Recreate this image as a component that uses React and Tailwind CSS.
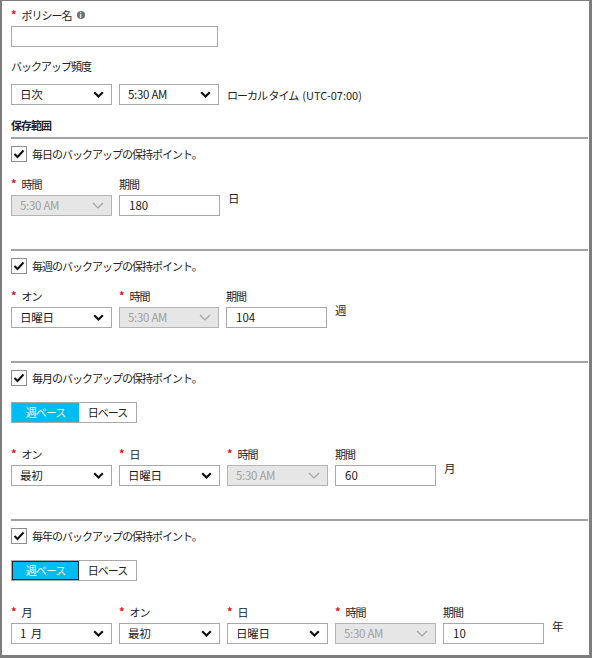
import React from "react";

const Chevron = ({ disabled }) =>
  disabled ? (
    <svg width="12" height="7" viewBox="0 0 12 7" fill="none">
      <path d="M1 1L6 6L11 1" stroke="#a3a3a3" strokeWidth="1.2" />
    </svg>
  ) : (
    <svg width="11" height="7" viewBox="0 0 11 7" fill="none">
      <path d="M1.2 1.2L5.5 5.5L9.8 1.2" stroke="#111" strokeWidth="2.2" />
    </svg>
  );

const Select = ({ value, disabled, w = "w-[101px]" }) => (
  <div
    className={`${w} h-[21px] flex items-center justify-between pl-[8px] pr-[7px] border ${
      disabled ? "bg-[#e6e6e6] border-[#b4b4b4] text-[#a0a0a0]" : "bg-white border-[#a8a8a8] text-[#1a1a1a]"
    }`}
  >
    <span className="text-[11.5px] leading-[19px] whitespace-pre tracking-[-0.3px]">{value}</span>
    <Chevron disabled={disabled} />
  </div>
);

const Input = ({ value = "", w = "w-[101px]" }) => (
  <div className={`${w} h-[21px] flex items-center pl-[9px] border border-[#a8a8a8] bg-white text-[#1a1a1a] text-[11.5px] leading-[19px]`}>
    {value}
  </div>
);

const Star = () => <span className="text-[#e0101a] font-bold text-[11px] mr-[5px] mt-[-2px]">*</span>;

// japanese text in the original is set in a narrow UI face
const jp = "text-[11px] tracking-[-1px] text-[#222]";

const Label = ({ text, required }) => (
  <div className="h-[16px] leading-[16px] mb-[3px] flex items-center">
    {required && <Star />}
    <span className={jp}>{text}</span>
  </div>
);

const Field = ({ label, required, children }) => (
  <div className="flex flex-col">
    <Label text={label} required={required} />
    {children}
  </div>
);

const Check = ({ text }) => (
  <div className="flex items-center h-[16px] mt-[7px]">
    <div className="w-[16px] h-[16px] border border-[#8c8c8c] bg-white flex items-center justify-center">
      <svg width="12" height="10" viewBox="0 0 12 10" fill="none">
        <path d="M1.5 5L4.5 8L10.5 1.5" stroke="#111" strokeWidth="2" />
      </svg>
    </div>
    <span className={`ml-[5px] leading-[16px] ${jp}`}>{text}</span>
  </div>
);

const Toggle = ({ focus }) => (
  <div className="flex mt-[16px] h-[21px] w-[126px] border border-[#a8a8a8] text-[11px] tracking-[-1px]">
    <div
      className={`w-[67px] bg-[#00bcf2] text-white flex items-center justify-center ${
        focus ? "outline outline-1 outline-[#2b2b2b] -outline-offset-1" : ""
      }`}
    >
      週ベース
    </div>
    <div className="flex-1 bg-white text-[#222] flex items-center justify-center">日ベース</div>
  </div>
);

const Divider = () => <div className="h-[2px] bg-[#a3a3a3] mr-[1px]" />;

const Unit = ({ text }) => (
  <div className="self-end ml-[1px] mb-[4px] h-[21px] text-[11.5px] leading-[13px] text-[#222] pt-[1px]">{text}</div>
);

export default function App() {
  return (
    <div className="w-[592px] h-[658px] bg-white border-t border-l-2 border-r-[3px] border-b-[3px] border-[#7d7d7d] overflow-hidden font-['Noto_Sans_CJK_JP','Noto_Sans',sans-serif]">
      <div className="pl-[9px] pt-[6px]">
        <div className="h-[16px] leading-[16px] flex items-center">
          <Star />
          <span className={jp}>ポリシー名</span>
          <span className="ml-[5px] w-[8px] h-[8px] rounded-full bg-[#6e6e6e] text-white text-[7px] font-bold leading-[8px] text-center">
            i
          </span>
        </div>
        <div className="mt-[3px]">
          <Input w="w-[207px]" />
        </div>

        <div className={`mt-[11px] h-[16px] leading-[16px] ${jp}`}>バックアップ頻度</div>
        <div className="mt-[10px] h-[21px] flex items-center gap-[7px]">
          <Select value="日次" />
          <Select value="5:30 AM" w="w-[100px]" />
          <span className="ml-[1px] text-[11px] leading-[16px] text-[#222]">
            <span className={jp}>ローカル タイム</span>
            <span className="ml-[4px]">(UTC-07:00)</span>
          </span>
        </div>

        <div className={`mt-[12px] h-[16px] leading-[16px] font-bold ${jp}`}>保存範囲</div>
        <div className="mt-[4px]">
          <Divider />
        </div>

        {/* 日 */}
        <Check text="毎日のバックアップの保持ポイント。" />
        <div className="mt-[14px] flex gap-[7px]">
          <Field label="時間" required>
            <Select value="5:30 AM" disabled />
          </Field>
          <Field label="期間">
            <Input value="180" />
          </Field>
          <Unit text="日" />
        </div>
        <div className="mt-[33px]">
          <Divider />
        </div>

        {/* 週 */}
        <Check text="毎週のバックアップの保持ポイント。" />
        <div className="mt-[14px] flex gap-[7px]">
          <Field label="オン" required>
            <Select value="日曜日" />
          </Field>
          <Field label="時間" required>
            <Select value="5:30 AM" disabled w="w-[100px]" />
          </Field>
          <Field label="期間">
            <Input value="104" />
          </Field>
          <Unit text="週" />
        </div>
        <div className="mt-[33px]">
          <Divider />
        </div>

        {/* 月 */}
        <Check text="毎月のバックアップの保持ポイント。" />
        <Toggle />
        <div className="mt-[23px] flex gap-[7px]">
          <Field label="オン" required>
            <Select value="最初" />
          </Field>
          <Field label="日" required>
            <Select value="日曜日" />
          </Field>
          <Field label="時間" required>
            <Select value="5:30 AM" disabled />
          </Field>
          <Field label="期間">
            <Input value="60" />
          </Field>
          <Unit text="月" />
        </div>
        <div className="mt-[33px]">
          <Divider />
        </div>

        {/* 年 */}
        <Check text="毎年のバックアップの保持ポイント。" />
        <Toggle focus />
        <div className="mt-[23px] flex gap-[7px]">
          <Field label="月" required>
            <Select value="1  月" />
          </Field>
          <Field label="オン" required>
            <Select value="最初" />
          </Field>
          <Field label="日" required>
            <Select value="日曜日" />
          </Field>
          <Field label="時間" required>
            <Select value="5:30 AM" disabled />
          </Field>
          <Field label="期間">
            <Input value="10" />
          </Field>
          <Unit text="年" />
        </div>
      </div>
    </div>
  );
}
